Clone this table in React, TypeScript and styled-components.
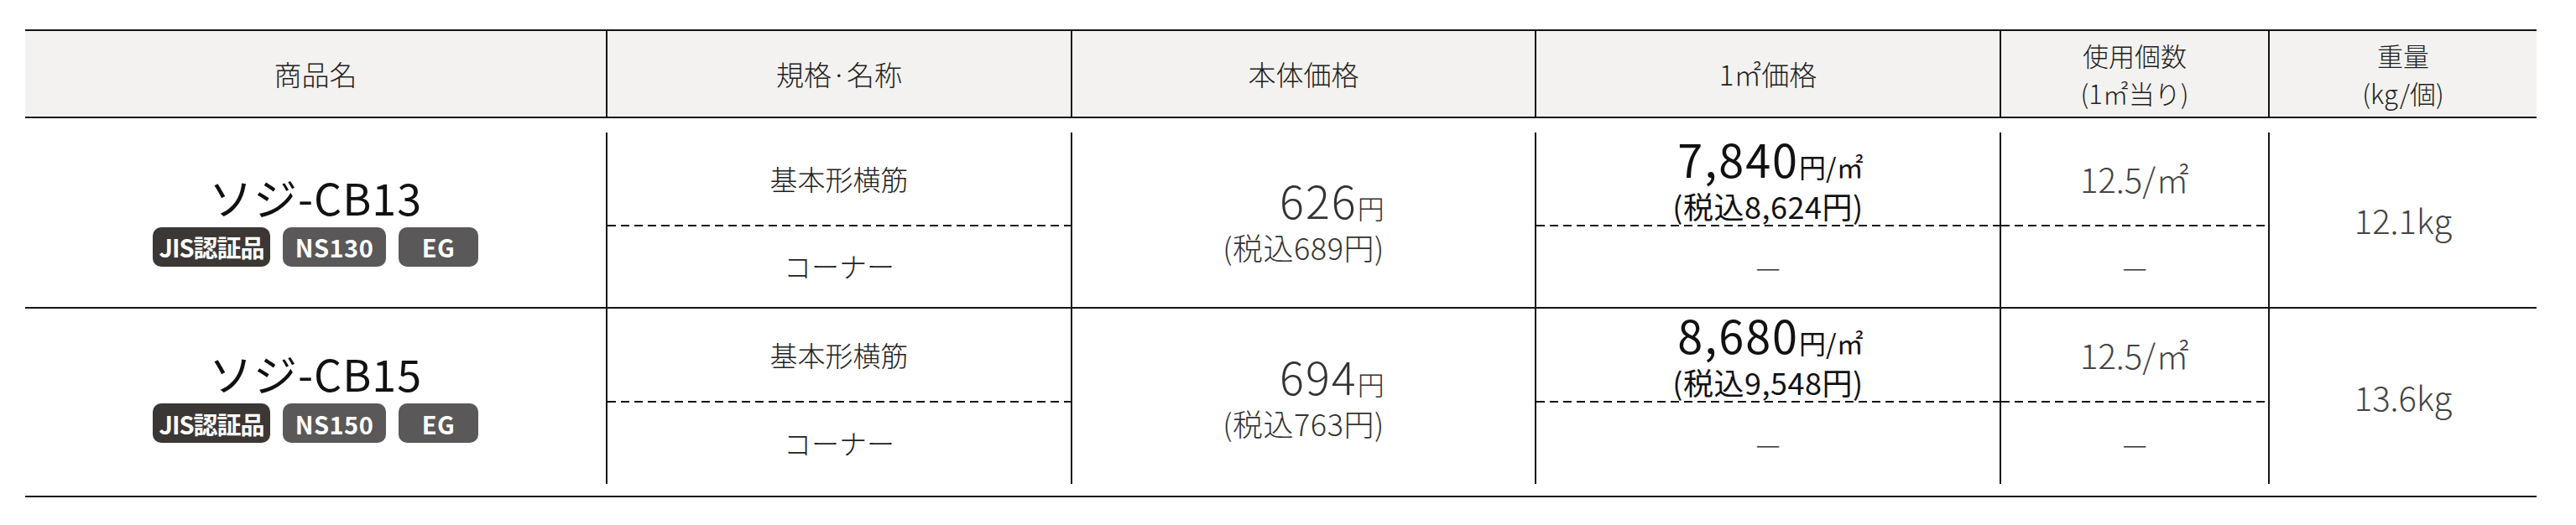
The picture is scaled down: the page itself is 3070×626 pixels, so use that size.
import React from "react";
import styled, { createGlobalStyle } from "styled-components";

const GlobalStyle = createGlobalStyle`
  html, body {
    margin: 0;
    padding: 0;
    background: #ffffff;
  }
  body {
    font-family: "Noto Sans CJK JP", "Noto Sans", sans-serif;
    color: #222222;
  }
  * {
    box-sizing: border-box;
  }
`;

const COLS = "692px 554px 553px 554px 320px 320px";
const LINE = "#141414";

const Page = styled.div`
  padding: 35px 0 0 30px;
`;

const Table = styled.div`
  width: 2993px;
  border-bottom: 2px solid ${LINE};
`;

const HeadRow = styled.div`
  display: grid;
  grid-template-columns: ${COLS};
  height: 106px;
  background: #f3f2f0;
  border-top: 2px solid ${LINE};
  border-bottom: 2px solid ${LINE};
`;

const HeadCell = styled.div<{ $stacked?: boolean }>`
  display: flex;
  flex-direction: column;
  align-items: center;
  justify-content: center;
  font-size: ${(p) => (p.$stacked ? 31 : 33)}px;
  font-weight: 300;
  line-height: 45px;
  color: #1e1e1e;
  & + & {
    border-left: 2px solid ${LINE};
  }
`;

const Body = styled.div`
  padding: 17px 0 14px;
`;

const Row = styled.div`
  display: grid;
  grid-template-columns: ${COLS};
  height: 208px;
  & + & {
    height: 211px;
    border-top: 2px solid ${LINE};
  }
`;

const Cell = styled.div`
  display: flex;
  flex-direction: column;
  align-items: center;
  justify-content: center;
  border-left: 2px solid ${LINE};
  &:first-child {
    border-left: none;
  }
`;

const SplitCell = styled.div`
  display: grid;
  grid-template-rows: 110px 1fr;
  border-left: 2px solid ${LINE};
`;

const SubCell = styled.div<{ $dashed?: boolean }>`
  display: flex;
  align-items: center;
  justify-content: center;
  background-image: ${(p) =>
    p.$dashed
      ? `repeating-linear-gradient(to right, ${LINE} 0 10px, transparent 10px 16px)`
      : "none"};
  background-size: 100% 2px;
  background-repeat: no-repeat;
  background-position: top left;
`;

const Name = styled.div`
  font-size: 52px;
  font-weight: 400;
  line-height: 56px;
  color: #111;
  letter-spacing: 1px;
`;

const Badges = styled.div`
  display: flex;
  gap: 15px;
  margin-top: 8px;
`;

const Badge = styled.span<{ $dark?: boolean; $w: number }>`
  display: inline-flex;
  align-items: center;
  justify-content: center;
  width: ${(p) => p.$w}px;
  height: 47px;
  border-radius: 10px;
  background: ${(p) => (p.$dark ? "#3b3735" : "#5a5858")};
  color: #ffffff;
  font-size: 29px;
  font-weight: 700;
  letter-spacing: ${(p) => (p.$dark ? "-1px" : "0.5px")};
  white-space: nowrap;
`;

const Label = styled.span`
  font-size: 33px;
  font-weight: 300;
  color: #222;
`;

const Dash = styled.span`
  font-size: 33px;
  font-weight: 300;
  color: #333;
`;

const PriceBlock = styled.div<{ $strong?: boolean }>`
  display: inline-flex;
  flex-direction: column;
  align-items: flex-end;
  color: ${(p) => (p.$strong ? "#111" : "#333")};
  font-weight: ${(p) => (p.$strong ? 400 : 300)};
`;

const Big = styled.div`
  font-size: 54px;
  line-height: 54px;
  letter-spacing: 2px;
  white-space: nowrap;
`;

const Unit = styled.span`
  font-size: 32px;
  letter-spacing: 0;
`;

const Tax = styled.div`
  font-size: 36px;
  line-height: 40px;
  letter-spacing: 0.5px;
  white-space: nowrap;
`;

const Plain = styled.span`
  font-size: 40px;
  font-weight: 300;
  color: #444;
`;

type Product = {
  name: string;
  ns: string;
  price: string;
  priceTax: string;
  perM2: string;
  perM2Tax: string;
  usage: string;
  weight: string;
};

const products: Product[] = [
  {
    name: "ソジ-CB13",
    ns: "NS130",
    price: "626",
    priceTax: "689",
    perM2: "7,840",
    perM2Tax: "8,624",
    usage: "12.5/㎡",
    weight: "12.1kg",
  },
  {
    name: "ソジ-CB15",
    ns: "NS150",
    price: "694",
    priceTax: "763",
    perM2: "8,680",
    perM2Tax: "9,548",
    usage: "12.5/㎡",
    weight: "13.6kg",
  },
];

export default function App() {
  return (
    <>
      <GlobalStyle />
      <Page>
        <Table>
          <HeadRow>
            <HeadCell>商品名</HeadCell>
            <HeadCell>規格·名称</HeadCell>
            <HeadCell>本体価格</HeadCell>
            <HeadCell>1㎡価格</HeadCell>
            <HeadCell $stacked>
              <span>使用個数</span>
              <span>(1㎡当り)</span>
            </HeadCell>
            <HeadCell $stacked>
              <span>重量</span>
              <span>(kg/個)</span>
            </HeadCell>
          </HeadRow>
          <Body>
            {products.map((p) => (
              <Row key={p.name}>
                <Cell>
                  <Name>{p.name}</Name>
                  <Badges>
                    <Badge $dark $w={140}>
                      JIS認証品
                    </Badge>
                    <Badge $w={123}>{p.ns}</Badge>
                    <Badge $w={95}>EG</Badge>
                  </Badges>
                </Cell>
                <SplitCell>
                  <SubCell>
                    <Label>基本形横筋</Label>
                  </SubCell>
                  <SubCell $dashed>
                    <Label>コーナー</Label>
                  </SubCell>
                </SplitCell>
                <Cell>
                  <PriceBlock>
                    <Big>
                      {p.price}
                      <Unit>円</Unit>
                    </Big>
                    <Tax>(税込{p.priceTax}円)</Tax>
                  </PriceBlock>
                </Cell>
                <SplitCell>
                  <SubCell>
                    <PriceBlock $strong>
                      <Big>
                        {p.perM2}
                        <Unit>円/㎡</Unit>
                      </Big>
                      <Tax>(税込{p.perM2Tax}円)</Tax>
                    </PriceBlock>
                  </SubCell>
                  <SubCell $dashed>
                    <Dash>—</Dash>
                  </SubCell>
                </SplitCell>
                <SplitCell>
                  <SubCell>
                    <Plain>{p.usage}</Plain>
                  </SubCell>
                  <SubCell $dashed>
                    <Dash>—</Dash>
                  </SubCell>
                </SplitCell>
                <Cell>
                  <Plain>{p.weight}</Plain>
                </Cell>
              </Row>
            ))}
          </Body>
        </Table>
      </Page>
    </>
  );
}
